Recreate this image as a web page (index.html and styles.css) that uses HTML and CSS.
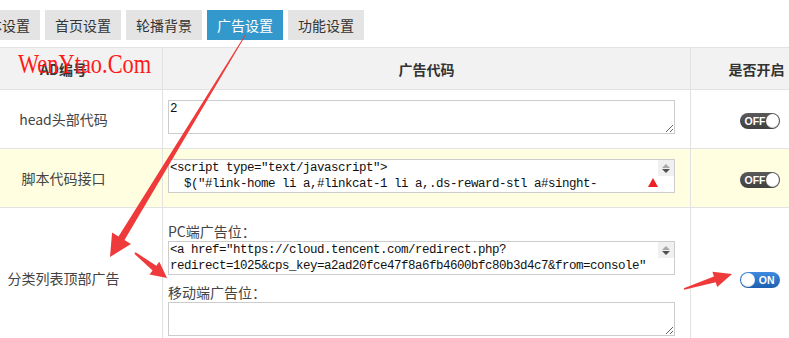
FILE: index.html
```html
<!DOCTYPE html>
<html lang="zh-CN">
<head>
  <meta charset="UTF-8">
  <title>广告设置</title>
  <link rel="stylesheet" href="styles.css">
</head>
<body>
  <div class="page">
    <ul class="tabs">
      <li>基本设置</li>
      <li>首页设置</li>
      <li>轮播背景</li>
      <li class="active">广告设置</li>
      <li>功能设置</li>
    </ul>
    <table class="ad-table">
      <colgroup>
        <col class="col-name">
        <col class="col-code">
        <col class="col-switch">
      </colgroup>
      <thead>
        <tr><th>AD编号</th><th>广告代码</th><th>是否开启</th></tr>
      </thead>
      <tbody>
        <tr>
          <td class="name">head头部代码</td>
          <td class="code"><textarea>2</textarea></td>
          <td class="switch">
            <span class="toggle off"><span class="toggle-text">OFF</span><span class="knob"></span></span>
          </td>
        </tr>
        <tr class="highlight">
          <td class="name">脚本代码接口</td>
          <td class="code">
            <div class="field">
              <textarea class="scroll">&lt;script type="text/javascript"&gt;
  $("#link-home li a,#linkcat-1 li a,.ds-reward-stl a#singht-
box a").attr("target","_blank");
&lt;/script&gt;</textarea>
              <span class="spin"></span>
              <span class="flag"></span>
            </div>
          </td>
          <td class="switch">
            <span class="toggle off"><span class="toggle-text">OFF</span><span class="knob"></span></span>
          </td>
        </tr>
        <tr>
          <td class="name">分类列表顶部广告</td>
          <td class="code code-split">
            <label>PC端广告位：</label>
            <div class="field">
              <textarea class="scroll">&lt;a href="https://cloud.tencent.com/redirect.php?
redirect=1025&amp;cps_key=a2ad20fce47f8a6fb4600bfc80b3d4c7&amp;from=console"
target="_blank"&gt;&lt;/a&gt;</textarea>
              <span class="spin"></span>
            </div>
            <label class="second">移动端广告位：</label>
            <textarea></textarea>
          </td>
          <td class="switch">
            <span class="toggle on"><span class="knob"></span><span class="toggle-text">ON</span></span>
          </td>
        </tr>
      </tbody>
    </table>
  </div>

  <!-- annotations drawn over the screenshot -->
  <div class="watermark">WenYtao.Com</div>
  <svg class="marks" width="789" height="338" viewBox="0 0 789 338">
    <polygon points="246.3,34.2 124.5,240 130.9,244 110,257 112.1,232.5 118.5,236.4 245.7,33.8"/>
    <polygon points="134.4,253.8 152.6,270.5 149.5,274.4 167,278 159.3,261.8 156.3,265.7 135.6,252.2"/>
    <polygon points="684.2,289.8 715.7,282.2 717.2,287 732,274 712.4,271.8 713.9,276.5 683.8,288.2"/>
  </svg>
</body>
</html>
```

FILE: styles.css
```css
body {
  margin: 0;
  width: 789px;
  height: 338px;
  overflow: hidden;
  position: relative;
  background: #fff;
  color: #333;
  font-family: "Noto Sans CJK SC", "Noto Sans", sans-serif;
}
.page {
  margin-left: -36px;
  padding-top: 10px;
}
/* Tabs */
.tabs {
  list-style: none;
  margin: 0;
  padding: 0;
  display: flex;
  gap: 5px;
}
.tabs li {
  height: 30px;
  line-height: 30px;
  padding: 0 10px;
  background: #e4e4e4;
  font-size: 14px;
  color: #333;
}
.tabs li.active {
  background: #3399cc;
  color: #fff;
}
/* Table */
.ad-table {
  margin-top: 7px;
  border-collapse: collapse;
  table-layout: fixed;
  width: 858px;
  font-size: 14px;
}
.col-name { width: 198px; }
.col-code { width: 528px; }
.col-switch { width: 132px; }
.ad-table th,
.ad-table td {
  border: 1px solid #e2e2e2;
}
.ad-table th {
  height: 41px;
  padding: 0;
  background: #f2f2f2;
  font-weight: bold;
  color: #333;
  text-align: center;
}
.ad-table td {
  height: 59px;
  padding: 0 5px 4px;
  vertical-align: middle;
  box-sizing: border-box;
}
.ad-table td.name {
  text-align: center;
  color: #444;
  padding: 0;
}
.ad-table td.switch {
  text-align: center;
  padding: 0 0 0 6px;
}
.highlight td {
  background: #fffee0;
}
.code-split {
  padding: 13px 5px 12px !important;
}
.code-split label {
  display: block;
  line-height: 20px;
  color: #444;
}
.code-split label.second {
  margin-top: 7px;
}
.field {
  position: relative;
  width: 507px;
}
textarea {
  display: block;
  width: 507px;
  height: 34px;
  margin: 0;
  padding: 0 1px;
  box-sizing: border-box;
  border: 1px solid #cccccc;
  outline: none;
  background: #fff;
  color: #111;
  font-family: "Liberation Mono", "Noto Sans CJK SC", monospace;
  font-size: 12.5px;
  line-height: 16px;
  letter-spacing: -0.5px;
  overflow: hidden;
}
textarea.scroll {
  overflow-y: scroll;
}
textarea.scroll::-webkit-scrollbar {
  width: 16px;
}
textarea.scroll::-webkit-scrollbar-track,
textarea.scroll::-webkit-scrollbar-thumb {
  background: #f0f0f0;
}
textarea.scroll::-webkit-resizer {
  background: #fff;
}
/* spinner arrows drawn over the narrow scrollbar */
.spin {
  position: absolute;
  top: 1px;
  right: 1px;
  width: 16px;
  height: 16px;
  display: flex;
  flex-direction: column;
  align-items: center;
  justify-content: center;
  gap: 1px;
  background: #f0f0f0;
  pointer-events: none;
}
.spin::before,
.spin::after {
  content: "";
  width: 0;
  height: 0;
  border-left: 4px solid transparent;
  border-right: 4px solid transparent;
}
.spin::before {
  border-bottom: 4px solid #a8a8a8;
}
.spin::after {
  border-top: 4px solid #505050;
}
.flag {
  position: absolute;
  right: 17px;
  bottom: 6px;
  width: 0;
  height: 0;
  border-left: 5px solid transparent;
  border-right: 5px solid transparent;
  border-bottom: 9px solid #ee2222;
}
/* On/off switch */
.toggle {
  display: inline-flex;
  align-items: center;
  justify-content: space-between;
  width: 40px;
  height: 16px;
  padding: 0 1px 0 5px;
  box-sizing: border-box;
  border-radius: 8px;
  vertical-align: middle;
}
.toggle.off {
  background: linear-gradient(#5a5a5a, #3f3f3f);
}
.toggle.on {
  padding: 0 5px 0 1px;
  background: linear-gradient(#3f8be0, #1d5fb0);
}
.toggle-text {
  color: #fff;
  font-family: "Liberation Sans", Arial, sans-serif;
  font-size: 10.5px;
  font-weight: bold;
  line-height: 16px;
}
.knob {
  width: 14px;
  height: 14px;
  border-radius: 50%;
  background: #fff;
  box-shadow: inset 0 -1px 1px rgba(0,0,0,0.15);
}
/* Annotations */
.watermark {
  position: absolute;
  left: 18px;
  top: 49px;
  font-family: "Liberation Serif", serif;
  font-size: 28px;
  line-height: 30px;
  color: #ff1a1a;
  transform: scaleX(0.8);
  transform-origin: left top;
  pointer-events: none;
}
.marks {
  position: absolute;
  left: 0;
  top: 0;
  pointer-events: none;
}
.marks polygon {
  fill: #ee3a3a;
}
```
